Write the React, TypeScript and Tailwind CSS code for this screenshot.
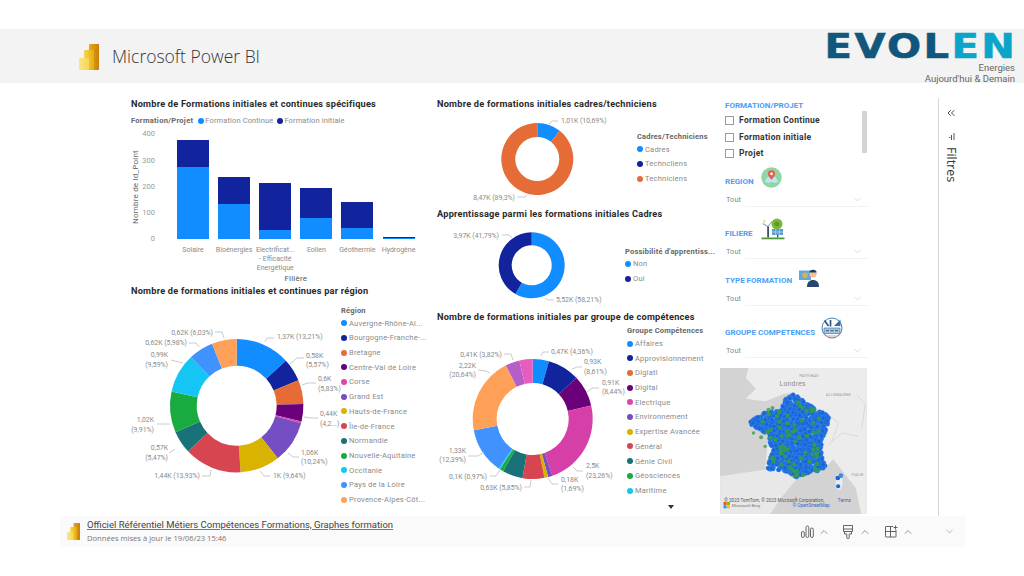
import { ChevronDown, ChevronUp, ChevronsLeft } from "lucide-react";

type Seg = [number, string];
type Label = { x: number; y: number; t: string; end?: boolean };

const C = {
  blue: "#118DFF",
  navy: "#12239E",
  orange: "#E66C37",
  purple: "#6B007B",
  pink: "#E044A7",
  violet: "#744EC2",
  yellow: "#D9B300",
  red: "#D64550",
  teal: "#197278",
  green: "#1AAB40",
  cyan: "#15C6F4",
  sky: "#4092FF",
  peach: "#FFA058",
};

const bars = [
  { name: ["Solaire"], cont: 275, init: 102 },
  { name: ["Bioénergies"], cont: 135, init: 101 },
  { name: ["Electrificat...", "- Efficacité", "Energétique"], cont: 35, init: 181 },
  { name: ["Eolien"], cont: 81, init: 113 },
  { name: ["Géothermie"], cont: 41, init: 102 },
  { name: ["Hydrogène"], cont: 2, init: 5 },
];

const regionSegs: Seg[] = [
  [13.21, C.blue], [5.57, C.navy], [5.83, C.orange], [4.2, C.purple], [0.4, C.pink], [10.24, C.violet],
  [9.64, C.yellow], [13.93, C.red], [5.47, C.teal], [9.91, C.green], [9.59, C.cyan], [5.98, C.sky], [6.03, C.peach],
];

const groupSegs: Seg[] = [
  [4.36, C.blue], [8.61, C.navy], [8.44, C.purple], [23.26, "#D63FA8"], [1.2, C.violet], [1, C.yellow],
  [5.85, C.red], [5.5, C.teal], [0.97, C.green], [0.4, C.cyan], [12.39, C.sky], [20.64, C.peach], [3.82, "#B55FC6"], [3.56, "#E85CC0"],
];

const regionLegend: [string, string][] = [
  ["Auvergne-Rhône-Al...", C.blue], ["Bourgogne-Franche-...", C.navy], ["Bretagne", C.orange], ["Centre-Val de Loire", C.purple],
  ["Corse", C.pink], ["Grand Est", C.violet], ["Hauts-de-France", C.yellow], ["Île-de-France", C.red], ["Normandie", C.teal],
  ["Nouvelle-Aquitaine", C.green], ["Occitanie", C.cyan], ["Pays de la Loire", C.sky], ["Provence-Alpes-Côt...", C.peach],
];

const groupLegend: [string, string][] = [
  ["Affaires", C.blue], ["Approvisionnement", C.navy], ["Digiatl", C.orange], ["Digital", C.purple], ["Electrique", C.pink],
  ["Environnement", C.violet], ["Expertise Avancée", C.yellow], ["Général", C.red], ["Génie Civil", C.teal], ["Géosciences", C.green], ["Maritime", C.cyan],
];

const regionLabels: Label[] = [
  { x: 277, y: 337, t: "1,37K (13,21%)" }, { x: 306, y: 356, t: "0,58K" }, { x: 306, y: 365, t: "(5,57%)" },
  { x: 318, y: 379, t: "0,6K" }, { x: 318, y: 389, t: "(5,83%)" }, { x: 320, y: 414, t: "0,44K" }, { x: 320, y: 424, t: "(4,2...)" },
  { x: 301, y: 453, t: "1,06K" }, { x: 301, y: 462, t: "(10,24%)" }, { x: 273, y: 476, t: "1K (9,64%)" },
  { x: 200, y: 476, t: "1,44K (13,93%)", end: true }, { x: 168, y: 448, t: "0,57K", end: true }, { x: 168, y: 458, t: "(5,47%)", end: true },
  { x: 154, y: 420, t: "1,02K", end: true }, { x: 154, y: 430, t: "(9,91%)", end: true }, { x: 168, y: 355, t: "0,99K", end: true },
  { x: 168, y: 365, t: "(9,59%)", end: true }, { x: 187, y: 343, t: "0,62K (5,98%)", end: true }, { x: 213, y: 333, t: "0,62K (6,03%)", end: true },
];
const regionLines = [
  "265,342 267,338 274,338", "290,364 297,358 304,358", "302,385 308,383 316,383", "304,417 311,418 318,418", "288,453 293,457 299,457",
  "260,471 264,476 270,476", "202,476 210,476 211,470", "169,453 175,449", "157,424 170,424", "171,360 183,363", "189,343 196,343 199,347", "215,332 222,332 224,338",
];

const groupLabels: Label[] = [
  { x: 551, y: 352, t: "0,47K (4,36%)" }, { x: 584, y: 362, t: "0,93K" }, { x: 584, y: 372, t: "(8,61%)" }, { x: 602, y: 383, t: "0,91K" },
  { x: 602, y: 392, t: "(8,44%)" }, { x: 586, y: 466, t: "2,5K" }, { x: 586, y: 476, t: "(23,26%)" }, { x: 561, y: 480, t: "0,18K" }, { x: 561, y: 489, t: "(1,69%)" },
  { x: 522, y: 488, t: "0,63K (5,85%)", end: true }, { x: 487, y: 477, t: "0,1K (0,97%)", end: true }, { x: 466, y: 451, t: "1,33K", end: true },
  { x: 466, y: 460, t: "(12,39%)", end: true }, { x: 476, y: 366, t: "2,22K", end: true }, { x: 476, y: 375, t: "(20,64%)", end: true }, { x: 502, y: 355, t: "0,41K (3,82%)", end: true },
];
const groupLines = [
  "541,356 543,352 549,352", "572,369 577,367 582,367", "587,392 592,388 599,388", "573,467 577,471 583,471", "548,478 552,484 558,484",
  "524,487 530,487 531,480", "490,476 496,476 500,470", "468,456 478,456 484,452", "478,370 486,371 490,373", "504,354 511,354 513,360",
];

const arc = (cx: number, cy: number, ro: number, ri: number, a: number, b: number) => {
  const p = (r: number, t: number) => `${cx + r * Math.sin(t)} ${cy - r * Math.cos(t)}`;
  const large = b - a > Math.PI ? 1 : 0;
  return `M${p(ro, a)}A${ro} ${ro} 0 ${large} 1 ${p(ro, b)}L${p(ri, b)}A${ri} ${ri} 0 ${large} 0 ${p(ri, a)}Z`;
};

// viewBox is in page coordinates so label positions read straight off the reference
const Donut = ({ box, cx, cy, ro, ri, segs, labels, lines, className }: {
  box: string; cx: number; cy: number; ro: number; ri: number; segs: Seg[]; labels: Label[]; lines: string[]; className: string;
}) => {
  const total = segs.reduce((s, x) => s + x[0], 0);
  let at = 0;
  return (
    <svg viewBox={box} className={`shrink-0 overflow-visible ${className}`}>
      {segs.map(([v, color], i) => {
        const a = (at / total) * Math.PI * 2;
        at += v;
        const b = (at / total) * Math.PI * 2;
        return <path key={i} d={arc(cx, cy, ro, ri, a, b)} fill={color} />;
      })}
      {lines.map((pts, i) => (
        <polyline key={i} points={pts} fill="none" stroke="#bdbdbd" strokeWidth="0.8" />
      ))}
      {labels.map((l, i) => (
        <text key={i} x={l.x} y={l.y} textAnchor={l.end ? "end" : "start"} dominantBaseline="middle" fontSize="6.9" fill="#8a8a8a">
          {l.t}
        </text>
      ))}
    </svg>
  );
};

const Title = ({ children }: { children: string }) => (
  <h2 className="h-3 whitespace-nowrap text-[9.2px] font-bold leading-3 tracking-[0.22px] text-[#2b2a29]">{children}</h2>
);

const Legend = ({ title, items, className }: { title: string; items: [string, string][]; className: string }) => (
  <div className={className}>
    <div className="h-[10px] whitespace-nowrap text-[7.5px] font-bold leading-[10px] tracking-[0.2px] text-[#666]">{title}</div>
    {items.map(([name, color]) => (
      <div key={name} className="flex h-[14.7px] items-center gap-[2px]">
        <span className="h-[6px] w-[6px] shrink-0 rounded-full" style={{ background: color }} />
        <span className="whitespace-nowrap text-[7.5px] tracking-[0.22px] text-[#8a8a8a]">{name}</span>
      </div>
    ))}
  </div>
);

const BarChart = () => (
  <div className="h-[175px]">
    <div className="mt-[5px] flex h-3 items-center gap-[1px] whitespace-nowrap text-[7.5px] tracking-[0.12px] text-[#8a8a8a]">
      <span className="mr-[4px] font-bold tracking-[0.3px] text-[#666]">Formation/Projet</span>
      <span className="h-[6px] w-[6px] rounded-full bg-[#118DFF]" />
      <span className="mr-[3px]">Formation Continue</span>
      <span className="h-[6px] w-[6px] rounded-full bg-[#12239E]" />
      <span>Formation initiale</span>
    </div>
    <div className="mt-[7px] flex h-[105px]">
      <div className="flex w-[10px] items-center justify-center">
        <span className="whitespace-nowrap text-[8px] tracking-[0.2px] text-[#666] [transform:rotate(-90deg)]">Nombre de Id_Point</span>
      </div>
      <div className="flex w-[14px] flex-col justify-between text-right text-[7.5px] text-[#999]">
        {["400", "300", "200", "100", "0"].map((t) => (
          <div key={t} className="flex h-0 items-center justify-end">{t}</div>
        ))}
      </div>
      <div className="ml-[17.5px] flex items-end">
        {bars.map((b) => (
          <div key={b.name[0]} className="flex w-[41.1px] flex-col items-center">
            <div className="w-[32px] bg-[#12239E]" style={{ height: b.init * 0.2615 }} />
            <div className="w-[32px] bg-[#118DFF]" style={{ height: b.cont * 0.2615 }} />
          </div>
        ))}
      </div>
    </div>
    <div className="ml-[41.5px] mt-[7px] flex h-[27px]">
      {bars.map((b) => (
        <div key={b.name[0]} className="w-[41.1px] whitespace-nowrap text-center text-[7px] leading-[9px] text-[#8a8a8a]">
          {b.name.map((n) => <div key={n}>{n}</div>)}
        </div>
      ))}
    </div>
    <div className="ml-[41.5px] mt-[1px] w-[246.6px] text-center text-[8px] leading-[9px] tracking-[0.2px] text-[#555]">Filière</div>
  </div>
);

const PowerBiLogo = ({ id, className }: { id: string; className: string }) => (
  <svg viewBox="0 0 20 26" className={className}>
    <defs>
      <linearGradient id={`${id}a`} x1="0" x2="1" y1="0" y2="0">
        <stop offset="0" stopColor="#E6AD10" />
        <stop offset="1" stopColor="#C87D0E" />
      </linearGradient>
      <linearGradient id={`${id}b`} x1="0" x2="1" y1="0" y2="0">
        <stop offset="0" stopColor="#F6D751" />
        <stop offset="1" stopColor="#E6AD10" />
      </linearGradient>
      <linearGradient id={`${id}c`} x1="0" x2="1" y1="0" y2="0">
        <stop offset="0" stopColor="#F9E589" />
        <stop offset="1" stopColor="#F6D751" />
      </linearGradient>
    </defs>
    <rect x="10" y="0" width="10" height="26" rx="0.8" fill={`url(#${id}a)`} />
    <rect x="5" y="6" width="10" height="20" rx="0.8" fill={`url(#${id}b)`} />
    <rect x="0" y="14" width="10" height="12" rx="0.8" fill={`url(#${id}c)`} />
  </svg>
);

const RegionIcon = () => (
  <svg viewBox="0 0 21 21" className="ml-[7px] h-[21px] w-[21px] shrink-0">
    <circle cx="10.5" cy="10.5" r="10.2" fill="#8FD6A4" />
    <path d="M3.5 14.5 7 9.5h7l3.5 5-3.5 1.5-3.5-1-3.5 1z" fill="#BFE3F2" />
    <path d="M10.5 3.2a3.6 3.6 0 0 1 3.6 3.6c0 2.5-3.6 6-3.6 6s-3.6-3.5-3.6-6a3.6 3.6 0 0 1 3.6-3.6z" fill="#E4604E" />
    <circle cx="10.5" cy="6.8" r="1.4" fill="#fff" />
  </svg>
);

const FiliereIcon = () => (
  <svg viewBox="0 0 24 22" className="ml-[8px] h-[22px] w-[24px] shrink-0">
    <circle cx="16" cy="6" r="5.5" fill="#7DB83A" />
    <circle cx="16" cy="6" r="2.6" fill="#5C9A2B" />
    <path d="M7 8.5 1.5 5.5M7 8.5l4-5M7 8.5 7.5 14" stroke="#9AA7B2" strokeWidth="1.2" />
    <rect x="6.2" y="8.5" width="1.8" height="11" fill="#3E5568" />
    <path d="M2 3.5 3.6.8 3.2 3l1.3-.2L3 5.5l.3-2z" fill="#F4B53F" />
    <rect x="11" y="11" width="11" height="6" fill="#5B9BD5" />
    <path d="M11 14h11M14.7 11v6M18.4 11v6" stroke="#CFE3F5" strokeWidth="0.6" />
    <rect x="16" y="17" width="1.4" height="2.5" fill="#3E5568" />
    <rect x="0.5" y="19.5" width="23" height="1.8" fill="#4C9A3A" />
  </svg>
);

const TypeIcon = () => (
  <svg viewBox="0 0 22 20" className="ml-[7px] h-[20px] w-[22px] shrink-0">
    <rect x="0" y="3.5" width="12" height="9.5" fill="#5FA8E0" />
    <circle cx="6" cy="8.2" r="2.8" fill="#D9B44A" />
    <path d="M8 20c0-5 2.5-7 6-7s6 2 6 7z" fill="#27476E" />
    <circle cx="14" cy="7" r="3.6" fill="#F2C09B" />
    <path d="M10.3 5.5C10.5 1.8 17.5 1.8 17.7 5.5z" fill="#1F3A5F" />
  </svg>
);

const GroupIcon = () => (
  <svg viewBox="0 0 22 22" className="ml-[6px] h-[22px] w-[22px] shrink-0">
    <circle cx="11" cy="11" r="10" fill="#fff" stroke="#4D7FA8" strokeWidth="1" />
    <path d="M13 9 19.5 2.5V9z" fill="#2F6DB0" />
    <path d="M3.5 3.5 7.5 9M9.5 3v6.5" stroke="#2C5A86" strokeWidth="1.7" />
    <rect x="3" y="11" width="16" height="5.5" fill="#A7C5DD" stroke="#3D6C94" strokeWidth="0.6" />
    <path d="M5 13.7h3M9.5 13.7h3M14 13.7h3" stroke="#2C5A86" strokeWidth="1" />
    <path d="M5 19h12" stroke="#E0A0A0" strokeWidth="1" />
  </svg>
);

const Slicer = ({ title, icon, className }: { title: string; icon: React.ReactNode; className: string }) => (
  <div className={className}>
    <div className="flex h-[23px] items-end pl-[5px]">
      <span className="mb-[2px] h-[10px] whitespace-nowrap text-[8px] font-bold leading-[10px] text-[#4C9DF8]">{title}</span>
      <div className="mb-[1px] self-end">{icon}</div>
    </div>
    <div className="mt-[5px] flex h-3 items-center justify-between pl-[6px] pr-[5px] text-[7.5px] text-[#8a8a8a]">
      <span>Tout</span>
      <ChevronDown className="h-[11px] w-[11px] text-[#bbb]" strokeWidth={1.2} />
    </div>
    <div className="ml-[25px] h-px bg-[#f2f2f2]" />
  </div>
);

const seeded = (seed: number) => () => {
  seed = (seed * 1664525 + 1013904223) % 4294967296;
  return seed / 4294967296;
};

const france: [number, number][] = [
  [235, 98], [280, 130], [342, 165], [332, 215], [318, 250], [322, 300], [336, 315], [300, 332], [245, 348], [205, 328],
  [155, 322], [172, 270], [160, 222], [100, 185], [150, 152], [195, 150], [212, 112],
];
const inside = (x: number, y: number) => {
  let hit = false;
  for (let i = 0, j = france.length - 1; i < france.length; j = i++) {
    const [xi, yi] = france[i];
    const [xj, yj] = france[j];
    if (yi > y !== yj > y && x < ((xj - xi) * (y - yi)) / (yj - yi) + xi) hit = !hit;
  }
  return hit;
};
const dots = (() => {
  const r = seeded(42);
  const out: { x: number; y: number; g: boolean }[] = [];
  while (out.length < 1400) {
    const x = 95 + r() * 250;
    const y = 95 + r() * 255;
    if (inside(x, y)) out.push({ x, y, g: r() < 0.05 });
  }
  return out;
})();

const FranceMap = () => (
  <div className="relative mt-[10px] h-[146px] w-[147px] overflow-hidden bg-[#d3d3d3]">
    <svg viewBox="15 20 440 438" className="h-full w-full">
      <path d="M100 20H245L275 60 265 85 200 100 150 120 92 112 122 82 92 50z" fill="#ececec" />
      <path d="M238 20H455V458H438L422 380 354 294 330 320 245 350 205 330 150 325 160 220 100 185 150 150 195 150 215 105 238 92z" fill="#ececec" />
      <path d="M15 345 150 325 205 332 242 356 205 400 165 458H15z" fill="#e8e8e8" />
      <path d="M340 250 380 215 430 225M345 165 370 185 350 240M425 100 450 130 440 200" fill="none" stroke="#c4c4c4" strokeWidth="1.5" />
      <ellipse cx="372" cy="362" rx="10" ry="24" fill="#ececec" />
      <text x="193" y="73" fontSize="20" fill="#8c8c8c" letterSpacing="1">Londres</text>
      <text x="252" y="48" fontSize="13" fill="#a0a0a0">PAYS-BAS</text>
      <text x="332" y="105" fontSize="13" fill="#a0a0a0">ALLEMAGNE</text>
      <text x="408" y="345" fontSize="13" fill="#a0a0a0">ITALIE</text>
      {dots.filter((d) => !d.g).map((d, i) => (
        <circle key={i} cx={d.x} cy={d.y} r="6.5" fill="#1565D8" stroke="#3F86E8" strokeWidth="1.5" />
      ))}
      {dots.filter((d) => d.g).map((d, i) => (
        <circle key={i} cx={d.x} cy={d.y} r="6.5" fill="#2E9A58" />
      ))}
      <circle cx="160" cy="145" r="6" fill="#57A867" />
      <circle cx="172" cy="140" r="6" fill="#57A867" />
      <circle cx="115" cy="215" r="5" fill="#57A867" />
      <circle cx="138" cy="228" r="6" fill="#57A867" />
      <circle cx="150" cy="255" r="5" fill="#57A867" />
      <circle cx="368" cy="350" r="7" fill="#1565D8" />
      <circle cx="377" cy="343" r="7" fill="#3F86E8" />
      <circle cx="369" cy="375" r="6" fill="#1565D8" />
      <text x="27" y="422" fontSize="14" fill="#555">© 2023 TomTom, © 2023 Microsoft Corporation,</text>
      <text x="368" y="422" fontSize="14" fill="#3B63C4">Terms</text>
      <text x="50" y="437" fontSize="13" fill="#777">Microsoft Bing</text>
      <text x="232" y="438" fontSize="14" fill="#3B63C4">© OpenStreetMap</text>
      <rect x="25" y="422" width="9" height="9" fill="#F25022" />
      <rect x="35" y="422" width="9" height="9" fill="#7FBA00" />
      <rect x="25" y="432" width="9" height="9" fill="#00A4EF" />
      <rect x="35" y="432" width="9" height="9" fill="#FFB900" />
    </svg>
  </div>
);

const SlicerColumn = () => (
  <div className="relative w-[148px] shrink-0">
    <div className="mt-[2.5px] h-[10px] pl-[5px] text-[8px] font-bold leading-[10px] text-[#4C9DF8]">FORMATION/PROJET</div>
    <div className="mt-[1.5px]">
      {["Formation Continue", "Formation initiale", "Projet"].map((t) => (
        <div key={t} className="flex h-[16.7px] items-center gap-[5px] pl-[5px]">
          <span className="h-[9px] w-[9px] border border-[#9a9a9a]" />
          <span className="whitespace-nowrap text-[8.5px] font-bold tracking-[0.3px] text-[#333]">{t}</span>
        </div>
      ))}
    </div>
    <div className="absolute left-[142px] top-[13px] h-[42px] w-[5px] bg-[#d4d4d4]" />
    <Slicer title="REGION" icon={<RegionIcon />} className="mt-[3.5px]" />
    <Slicer title="FILIERE" icon={<FiliereIcon />} className="mt-[11px]" />
    <Slicer title="TYPE FORMATION" icon={<TypeIcon />} className="mt-[6px]" />
    <Slicer title="GROUPE COMPETENCES" icon={<GroupIcon />} className="mt-[11px]" />
    <FranceMap />
  </div>
);

const FiltersPane = () => (
  <div className="flex w-[86px] flex-col border-l border-[#d6d6d6] pl-[6px] text-[#333]">
    <ChevronsLeft className="mt-[9px] h-[12px] w-[12px]" strokeWidth={1.8} />
    <svg viewBox="0 0 8 8" className="ml-[3px] mt-[13px] h-2 w-2">
      <path d="M1 5.5h1.2M3.5 3v5M6 1v7" stroke="#555" strokeWidth="1" fill="none" />
    </svg>
    <span className="ml-[-1px] mt-[7px] self-start text-[12.5px] leading-[14px] [font-family:'Open_Sans',sans-serif] [writing-mode:vertical-rl]">Filtres</span>
  </div>
);

const FooterBar = () => (
  <div className="ml-[60px] flex h-[31px] w-[905px] items-center bg-[#fafafa] pl-[7px]">
    <PowerBiLogo id="foot" className="h-[17px] w-[13px]" />
    <div className="ml-[7px] mt-[-2px] flex flex-col">
      <span className="whitespace-nowrap text-[9.5px] leading-[14px] text-[#444] underline decoration-[#777]">Officiel Référentiel Métiers Compétences Formations, Graphes formation</span>
      <span className="mt-[1px] whitespace-nowrap text-[7.6px] leading-[11px] text-[#777] [font-family:'Open_Sans',sans-serif]">Données mises à jour le 19/06/23 15:46</span>
    </div>
    <div className="ml-auto mr-[10px] flex items-center text-[#555]">
      <svg viewBox="0 0 13 13" className="h-[13px] w-[13px]" fill="none" stroke="#555" strokeWidth="0.9">
        <rect x="0.5" y="6.5" width="2.8" height="6" rx="1.4" />
        <rect x="5" y="1" width="2.8" height="11.5" rx="1.4" />
        <rect x="9.5" y="3" width="2.8" height="9.5" rx="1.4" />
      </svg>
      <ChevronUp className="ml-[4px] h-[12px] w-[12px]" strokeWidth={1.2} />
      <svg viewBox="0 0 10 14" className="ml-[13px] h-[14px] w-[10px]" fill="none" stroke="#555" strokeWidth="0.9">
        <path d="M.5.5h9v6h-9zM.5 4h9M1.5 6.5V9h2.3v3.5a1.2 1.2 0 0 0 2.4 0V9h2.3V6.5" />
      </svg>
      <ChevronUp className="ml-[6px] h-[12px] w-[12px]" strokeWidth={1.2} />
      <svg viewBox="0 0 13 13" className="ml-[14px] h-[13px] w-[13px]" fill="none" stroke="#555" strokeWidth="0.9">
        <path d="M8 1.5H1a.5.5 0 0 0-.5.5v9.500a.5.5 0 0 0 .5.5h9.500a.5.5 0 0 0 .5-.5V5M.5 6.500H11M5.500 1.500V12M10.500.500v4M8.500 2.500h4" />
      </svg>
      <ChevronUp className="ml-[4px] h-[12px] w-[12px]" strokeWidth={1.2} />
      <ChevronDown className="ml-[30px] h-[11px] w-[11px] text-[#888]" strokeWidth={1.2} />
    </div>
  </div>
);

export default function App() {
  return (
    <div className="flex h-[576px] w-[1024px] flex-col overflow-hidden bg-white [font-family:Roboto,sans-serif]">
      <div className="h-[29px]" />
      <header className="flex h-[54px] shrink-0 items-start justify-between bg-[#f3f3f3]">
        <div className="ml-[79px] mt-[15px] flex items-center">
          <PowerBiLogo id="head" className="h-[26px] w-[20px]" />
          <span className="ml-[13px] mt-[-3px] whitespace-nowrap text-[17.5px] font-light leading-6 text-[#333] [font-family:'Open_Sans',sans-serif]">Microsoft Power BI</span>
        </div>
        <div className="mr-[9px] mt-[2px] flex flex-col items-end">
          <div className="mr-[-2px] h-[31px] origin-right scale-x-[1.18] whitespace-nowrap text-[34px] font-bold leading-[31px] tracking-[2px] [-webkit-text-stroke:0.6px] [font-family:'DejaVu_Sans',sans-serif]">
            <span className="text-[#11567C]">EVOL</span>
            <span className="text-[#0AA5C9]">EN</span>
          </div>
          <span className="text-[9.5px] leading-[11px] text-[#666]">Energies</span>
          <span className="text-[9.5px] leading-[12px] text-[#666]">Aujourd'hui &amp; Demain</span>
        </div>
      </header>
      <main className="flex h-[433px] shrink-0 pl-[131px] pt-[15px]">
        <div className="flex w-[306px] shrink-0 flex-col">
          <Title>Nombre de Formations initiales et continues spécifiques</Title>
          <BarChart />
          <Title>Nombre de formations initiales et continues par région</Title>
          <div className="flex">
            <Donut box="131 297 210 219" className="h-[219px] w-[210px]" cx={236.7} cy={405.7} ro={66.7} ri={40} segs={regionSegs} labels={regionLabels} lines={regionLines} />
            <Legend title="Région" items={regionLegend} className="pt-[9px]" />
          </div>
        </div>
        <div className="flex w-[283px] shrink-0 flex-col">
          <Title>Nombre de formations initiales cadres/techniciens</Title>
          <div className="flex h-[98px]">
            <Donut box="437 110 200 98" className="h-[98px] w-[200px]" cx={537.3} cy={159} ro={36} ri={22}
              segs={[[10.69, C.blue], [89.31, C.orange]]}
              labels={[{ x: 561, y: 121, t: "1,01K (10,69%)" }, { x: 515, y: 198, t: "8,47K (89,3%)", end: true }]}
              lines={["549,124 552,121 558,121", "517,197 525,197 527,195"]} />
            <Legend title="Cadres/Techniciens" items={[["Cadres", C.blue], ["Techncliens", C.navy], ["Techniciens", C.orange]]} className="pt-[22px]" />
          </div>
          <Title>Apprentissage parmi les formations initiales Cadres</Title>
          <div className="flex h-[91px]">
            <Donut box="437 220 188 91" className="h-[91px] w-[188px]" cx={531.7} cy={265.3} ro={33} ri={20}
              segs={[[58.21, C.blue], [41.79, C.navy]]}
              labels={[{ x: 499, y: 236, t: "3,97K (41,79%)", end: true }, { x: 556, y: 300, t: "5,52K (58,21%)" }]}
              lines={["502,235 509,235 512,238", "545,298 548,300 554,300"]} />
            <Legend title="Possibilité d'apprentiss..." items={[["Non", C.blue], ["Oui", C.navy]]} className="pt-[26.5px]" />
          </div>
          <Title>Nombre de formations initiales par groupe de compétences</Title>
          <div className="flex">
            <Donut box="437 323 190 193" className="h-[193px] w-[190px]" cx={532.7} cy={419} ro={60} ri={36} segs={groupSegs} labels={groupLabels} lines={groupLines} />
            <div className="pt-[3.3px]">
              <Legend title="Groupe Compétences" items={groupLegend} className="" />
              <svg viewBox="0 0 6 4" className="ml-[41px] mt-[7px] h-[4px] w-[6px]">
                <path d="M0 0h6L3 4z" fill="#333" />
              </svg>
            </div>
          </div>
        </div>
        <SlicerColumn />
        <div className="flex-1" />
        <FiltersPane />
      </main>
      <FooterBar />
    </div>
  );
}
